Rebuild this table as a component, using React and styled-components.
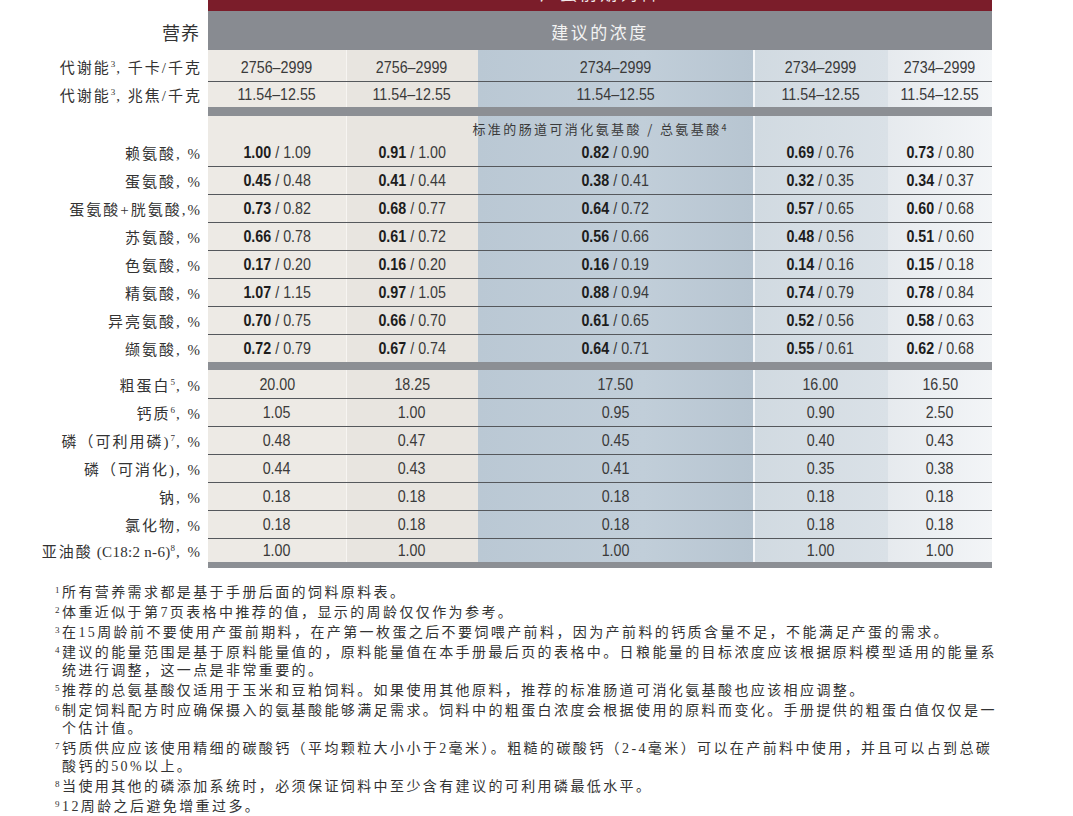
import React from "react";
import styled, { createGlobalStyle, css } from "styled-components";

const GlobalStyle = createGlobalStyle`
  html, body { margin: 0; padding: 0; background: #ffffff; }
  body {
    width: 1073px;
    height: 816px;
    overflow: hidden;
    font-family: "Liberation Serif", "Noto Sans CJK SC", serif;
    color: #333;
  }
`;

const GRID = "208px 138px 132px 275px 135px 104px";

const colBg = [
  css`background: #edeae5;`,
  css`background: #e8e5e0; box-shadow: inset 1px 0 0 #f7f5f2;`,
  css`background: linear-gradient(90deg, #bac8d4 0%, #c1ced9 60%, #b7c5d1 100%);`,
  css`background: linear-gradient(90deg, #d1dae1, #dae1e7); box-shadow: inset 2px 0 0 #f5f7f9;`,
  css`background: linear-gradient(90deg, #e6eaee, #f3f5f7);`,
];

const stripe = `linear-gradient(90deg,
  #edeae5 0 138px,
  #f7f5f2 138px 139px,
  #e8e5e0 139px 270px,
  #bac8d4 270px,
  #c1ced9 435px,
  #b7c5d1 545px,
  #f5f7f9 545px 547px,
  #d1dae1 547px,
  #dae1e7 680px,
  #e6eaee 680px,
  #f3f5f7 784px)`;

const Page = styled.div`
  width: 1073px;
  display: flex;
  flex-direction: column;
`;

const Table = styled.div`
  display: flex;
  flex-direction: column;
`;

const TitleBar = styled.div`
  margin-left: 208px;
  width: 784px;
  height: 11px;
  overflow: hidden;
  background: #7b1d2a;
  display: flex;
  justify-content: center;
  align-items: flex-start;
`;

const TitleText = styled.span`
  margin-top: -17px;
  font-family: "Noto Sans CJK SC", sans-serif;
  font-size: 17px;
  line-height: 20px;
  letter-spacing: 3px;
  color: #f2e8ea;
`;

const Row = styled.div`
  display: grid;
  grid-template-columns: ${GRID};
  height: ${(p) => p.$h}px;
`;

const HeaderRow = styled.div`
  display: grid;
  grid-template-columns: 208px 784px;
  height: 39px;
`;

const HeaderBand = styled.div`
  background: #888b91;
  display: flex;
  align-items: center;
  justify-content: center;
  font-family: "Noto Sans CJK SC", sans-serif;
  font-size: 17px;
  letter-spacing: 2.5px;
  color: #f3f3f3;
  padding-top: 2px;
`;

const Label = styled.div`
  display: flex;
  align-items: center;
  justify-content: flex-end;
  padding-right: ${(p) => (p.$big ? 8 : 6)}px;
  font-family: "Liberation Serif", "Noto Sans CJK SC", serif;
  font-size: ${(p) => (p.$big ? 18 : 15)}px;
  letter-spacing: ${(p) => (p.$big ? 1 : 2)}px;
  color: #333;
  white-space: nowrap;
  padding-top: ${(p) => (p.$big ? 3 : 1)}px;
`;

const LabelText = styled.span`
  white-space: pre;
`;

const Latin = styled.span`
  letter-spacing: 0.3px;
`;

const Sup = styled.sup`
  font-size: 9px;
  line-height: 0;
  vertical-align: 6px;
  letter-spacing: 0;
  margin-right: 1px;
`;

const Cell = styled.div`
  ${(p) => colBg[p.$col]}
  display: flex;
  align-items: center;
  justify-content: center;
  border-top: ${(p) => (p.$line ? "1px solid #55585c" : "none")};
  padding-top: ${(p) => (p.$low ? 4 : 1)}px;
`;

const Num = styled.span`
  display: inline-block;
  transform: scaleX(0.84);
  font-family: "Liberation Sans", Arial, sans-serif;
  font-size: 17px;
  color: #3a3a3a;
  white-space: pre;
`;

const Strong = styled.b`
  font-weight: 700;
  color: #1d1d1d;
`;

const Separator = styled.div`
  margin-left: 208px;
  width: 784px;
  height: ${(p) => p.$h}px;
  background: #8c8f94;
`;

const SubHeader = styled.div`
  grid-column: 2 / span 5;
  background: ${stripe};
  display: flex;
  align-items: center;
  justify-content: center;
  font-family: "Noto Sans CJK SC", sans-serif;
  font-size: 13px;
  letter-spacing: 2.4px;
  color: #3a3a3a;
  padding-top: 2px;
`;

const Notes = styled.div`
  display: flex;
  flex-direction: column;
  gap: 2px;
  padding: 16px 0 0 55px;
`;

const Note = styled.div`
  display: flex;
  align-items: flex-start;
  font-family: "Liberation Serif", "Noto Sans CJK SC", serif;
  font-size: 14px;
  line-height: 18px;
  letter-spacing: 2.4px;
  color: #333;
  white-space: nowrap;
`;

const NoteNum = styled.span`
  font-size: 9px;
  line-height: 12px;
  letter-spacing: 0;
  width: 7px;
  flex: none;
`;

const NoteText = styled.div`
  display: flex;
  flex-direction: column;
`;

const energy = [
  ["代谢能", "3", ", 千卡/千克", ["2756–2999", "2756–2999", "2734–2999", "2734–2999", "2734–2999"]],
  ["代谢能", "3", ", 兆焦/千克", Array(5).fill("11.54–12.55")],
];

const amino = [
  ["赖氨酸, %", ["1.00", "1.09"], ["0.91", "1.00"], ["0.82", "0.90"], ["0.69", "0.76"], ["0.73", "0.80"]],
  ["蛋氨酸, %", ["0.45", "0.48"], ["0.41", "0.44"], ["0.38", "0.41"], ["0.32", "0.35"], ["0.34", "0.37"]],
  ["蛋氨酸+胱氨酸,%", ["0.73", "0.82"], ["0.68", "0.77"], ["0.64", "0.72"], ["0.57", "0.65"], ["0.60", "0.68"]],
  ["苏氨酸, %", ["0.66", "0.78"], ["0.61", "0.72"], ["0.56", "0.66"], ["0.48", "0.56"], ["0.51", "0.60"]],
  ["色氨酸, %", ["0.17", "0.20"], ["0.16", "0.20"], ["0.16", "0.19"], ["0.14", "0.16"], ["0.15", "0.18"]],
  ["精氨酸, %", ["1.07", "1.15"], ["0.97", "1.05"], ["0.88", "0.94"], ["0.74", "0.79"], ["0.78", "0.84"]],
  ["异亮氨酸, %", ["0.70", "0.75"], ["0.66", "0.70"], ["0.61", "0.65"], ["0.52", "0.56"], ["0.58", "0.63"]],
  ["缬氨酸, %", ["0.72", "0.79"], ["0.67", "0.74"], ["0.64", "0.71"], ["0.55", "0.61"], ["0.62", "0.68"]],
];

const minerals = [
  ["粗蛋白", "", "5", ", %", ["20.00", "18.25", "17.50", "16.00", "16.50"]],
  ["钙质", "", "6", ", %", ["1.05", "1.00", "0.95", "0.90", "2.50"]],
  ["磷（可利用磷)", "", "7", ", %", ["0.48", "0.47", "0.45", "0.40", "0.43"]],
  ["磷（可消化), %", "", "", "", ["0.44", "0.43", "0.41", "0.35", "0.38"]],
  ["钠, %", "", "", "", Array(5).fill("0.18")],
  ["氯化物, %", "", "", "", Array(5).fill("0.18")],
  ["亚油酸", " (C18:2 n-6)", "8", ", %", Array(5).fill("1.00")],
];

const notes = [
  ["1", ["所有营养需求都是基于手册后面的饲料原料表。"]],
  ["2", ["体重近似于第7页表格中推荐的值，显示的周龄仅仅作为参考。"]],
  ["3", ["在15周龄前不要使用产蛋前期料，在产第一枚蛋之后不要饲喂产前料，因为产前料的钙质含量不足，不能满足产蛋的需求。"]],
  ["4", ["建议的能量范围是基于原料能量值的，原料能量值在本手册最后页的表格中。日粮能量的目标浓度应该根据原料模型适用的能量系", "统进行调整，这一点是非常重要的。"]],
  ["5", ["推荐的总氨基酸仅适用于玉米和豆粕饲料。如果使用其他原料，推荐的标准肠道可消化氨基酸也应该相应调整。"]],
  ["6", ["制定饲料配方时应确保摄入的氨基酸能够满足需求。饲料中的粗蛋白浓度会根据使用的原料而变化。手册提供的粗蛋白值仅仅是一", "个估计值。"]],
  ["7", ["钙质供应应该使用精细的碳酸钙（平均颗粒大小小于2毫米）。粗糙的碳酸钙（2-4毫米）可以在产前料中使用，并且可以占到总碳", "酸钙的50%以上。"]],
  ["8", ["当使用其他的磷添加系统时，必须保证饲料中至少含有建议的可利用磷最低水平。"]],
  ["9", ["12周龄之后避免增重过多。"]],
];

export default function App() {
  return (
    <Page>
      <GlobalStyle />
      <Table>
        <TitleBar>
          <TitleText>产蛋前期饲料</TitleText>
        </TitleBar>
        <HeaderRow>
          <Label $big>营养</Label>
          <HeaderBand>建议的浓度</HeaderBand>
        </HeaderRow>
        {energy.map(([a, s, b, vals], i) => (
          <Row key={a + b} $h={i === 0 ? 31 : 26}>
            <Label>
              <LabelText>
                {a}
                <Sup>{s}</Sup>
                {b}
              </LabelText>
            </Label>
            {vals.map((v, c) => (
              <Cell key={c} $col={c} $line={i > 0} $low={i === 0}>
                <Num>{v}</Num>
              </Cell>
            ))}
          </Row>
        ))}
        <Separator $h={9} />
        <Row $h={22}>
          <Label />
          <SubHeader>
            标准的肠道可消化氨基酸 / 总氨基酸<Sup>4</Sup>
          </SubHeader>
        </Row>
        {amino.map(([label, ...vals], i) => (
          <Row key={label} $h={28}>
            <Label>
              <LabelText>{label}</LabelText>
            </Label>
            {vals.map(([b, r], c) => (
              <Cell key={c} $col={c} $line={i > 0}>
                <Num>
                  <Strong>{b}</Strong>
                  {" / " + r}
                </Num>
              </Cell>
            ))}
          </Row>
        ))}
        <Separator $h={8} />
        {minerals.map(([a, lat, s, b, vals], i) => (
          <Row key={a} $h={i === minerals.length - 1 ? 24 : 28}>
            <Label>
              <LabelText>
                {a}
                {lat && <Latin>{lat}</Latin>}
                {s && <Sup>{s}</Sup>}
                {b}
              </LabelText>
            </Label>
            {vals.map((v, c) => (
              <Cell key={c} $col={c} $line={i > 0}>
                <Num>{v}</Num>
              </Cell>
            ))}
          </Row>
        ))}
        <Separator $h={6} />
      </Table>
      <Notes>
        {notes.map(([n, lines]) => (
          <Note key={n}>
            <NoteNum>{n}</NoteNum>
            <NoteText>
              {lines.map((l) => (
                <span key={l}>{l}</span>
              ))}
            </NoteText>
          </Note>
        ))}
      </Notes>
    </Page>
  );
}
